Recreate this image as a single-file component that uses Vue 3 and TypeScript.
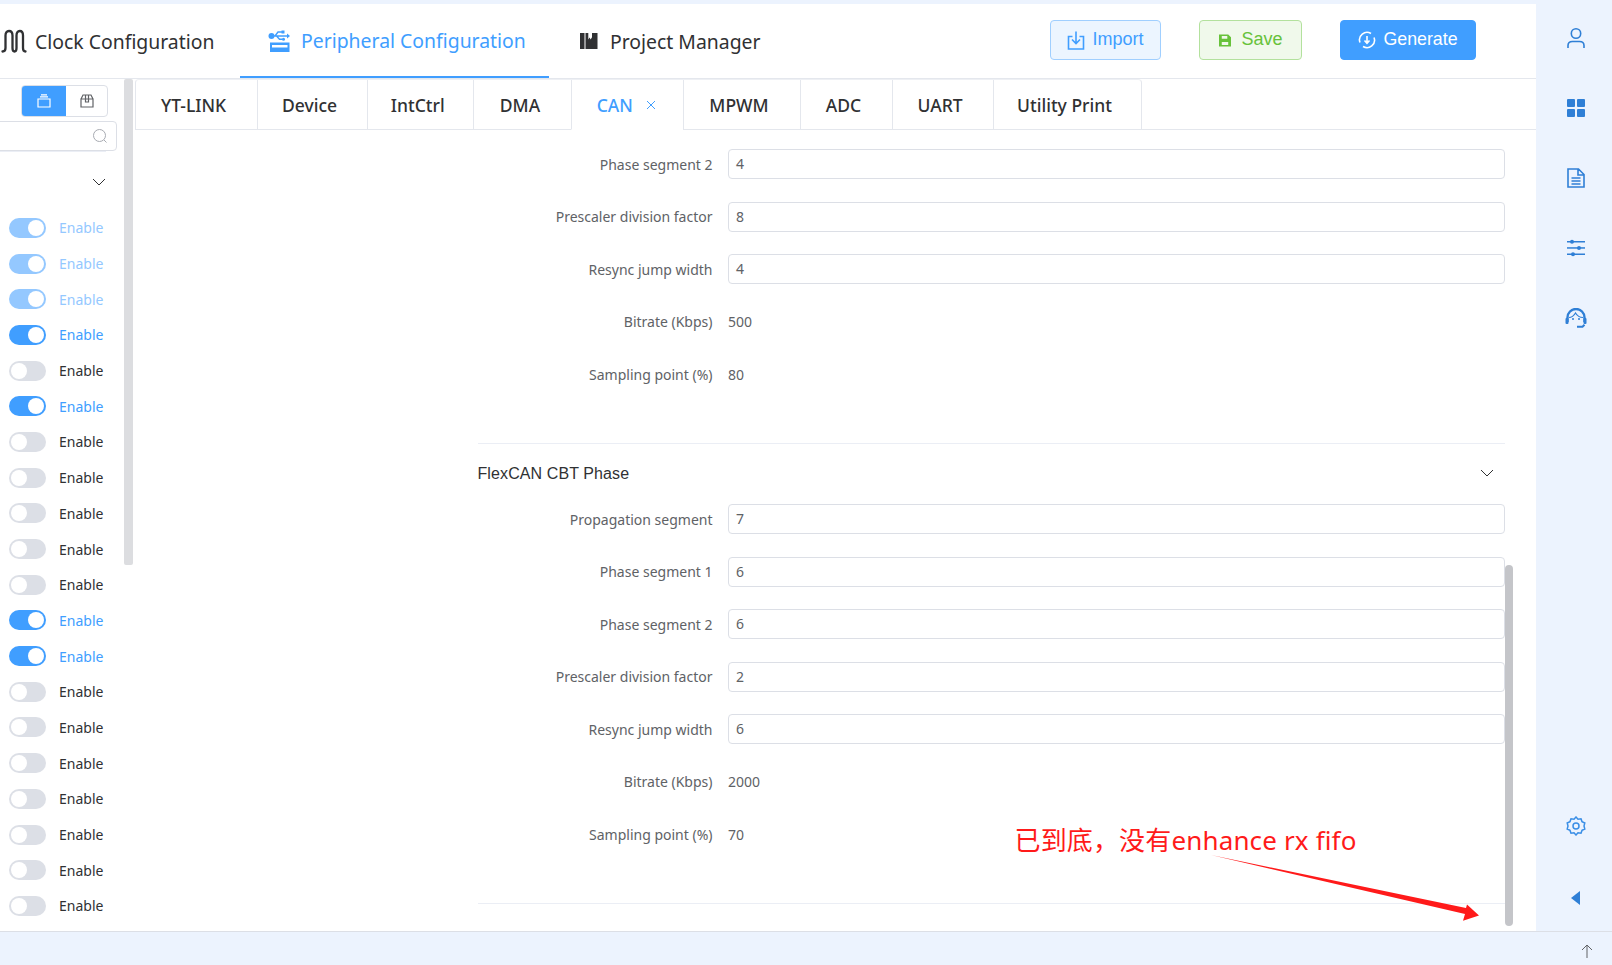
<script setup lang="ts">
interface Row { label: string; value: string; plain?: boolean }

const navTabs = ['YT-LINK', 'Device', 'IntCtrl', 'DMA', 'CAN', 'MPWM', 'ADC', 'UART', 'Utility Print']
const tabWidths = [121, 110, 106.5, 98, 111.5, 117, 92, 101, 148]

const toggles: Array<'dim' | 'on' | 'off'> = [
  'dim', 'dim', 'dim', 'on', 'off', 'on', 'off', 'off', 'off', 'off',
  'off', 'on', 'on', 'off', 'off', 'off', 'off', 'off', 'off', 'off',
]

const topRows: Row[] = [
  { label: 'Phase segment 2', value: '4' },
  { label: 'Prescaler division factor', value: '8' },
  { label: 'Resync jump width', value: '4' },
  { label: 'Bitrate (Kbps)', value: '500', plain: true },
  { label: 'Sampling point (%)', value: '80', plain: true },
]

const cbtRows: Row[] = [
  { label: 'Propagation segment', value: '7' },
  { label: 'Phase segment 1', value: '6' },
  { label: 'Phase segment 2', value: '6' },
  { label: 'Prescaler division factor', value: '2' },
  { label: 'Resync jump width', value: '6' },
  { label: 'Bitrate (Kbps)', value: '2000', plain: true },
  { label: 'Sampling point (%)', value: '70', plain: true },
]
</script>

<template>
  <div class="app">
    <div class="shell">
      <div class="work">
        <header class="header">
          <div class="nav nav-clock">
            <svg class="nav-icon" width="26" height="24" viewBox="0 0 26 24" fill="none" stroke="#303133" stroke-width="2.3" stroke-linecap="round">
              <path d="M1.5 22.5c2 0 3-1 3-3.500V6.500C4.500 3.500 5.700 2 8 2s3.500 1.500 3.500 4.500V19c0 2.500.6 3.500 2 3.500s2-1 2-3.500V6.500c0-3 1.200-4.500 3.300-4.500s3.200 1.500 3.200 4.500V19c0 2.500 1 3.500 2.500 3.500" />
            </svg>
            <span>Clock Configuration</span>
          </div>
          <div class="nav nav-periph">
            <svg class="nav-icon" width="22" height="22" viewBox="0 0 22 22" fill="none" stroke="#409eff" stroke-width="1.400">
              <circle cx="3.500" cy="6" r="3" fill="#409eff" stroke="none" />
              <path d="M3 6h16M7 6l3-4h4M8.500 6l3 3.200h3" />
              <path d="M19 3.500 22 6l-3 2.500z" fill="#409eff" stroke="none" />
              <rect x="13.500" y="0.500" width="3" height="3" fill="#409eff" stroke="none" />
              <circle cx="15.500" cy="9.200" r="1.500" fill="#409eff" stroke="none" />
              <path fill-rule="evenodd" d="M2 12.500h19.500V22H2zM4 15v2.500h15.500V15z" fill="#409eff" stroke="none" />
            </svg>
            <span>Peripheral Configuration</span>
          </div>
          <div class="nav nav-project">
            <svg class="nav-icon" width="18" height="18" viewBox="0 0 18 18" fill="#303133">
              <path d="M0 1h4.500v16H0z" />
              <path d="M5.500 1h2.800v6.500l1.200-2 1.200 2 1.300-2.200V1h5.500v16H5.500z" />
            </svg>
            <span>Project Manager</span>
          </div>
          <div class="actions">
            <button class="btn btn-import">
              <svg width="18" height="20" viewBox="0 0 18 20" fill="none" stroke="#409eff" stroke-width="1.600">
                <path d="M5.500 6.500H1.500V19h15V6.500h-4" />
                <path d="M9 1.500V13M5 9.500l4 4 4-4" />
              </svg>
              <span class="btn-text">Import</span>
            </button>
            <button class="btn btn-save">
              <svg width="12" height="13" viewBox="0 0 13 13" fill="#67c23a">
                <path fill-rule="evenodd" d="M0 0h10l3 3v10H0zM3 1.500v3h6v-3zM3 8v3.500h7V8z" />
              </svg>
              <span class="btn-text">Save</span>
            </button>
            <button class="btn btn-generate">
              <svg width="18" height="18" viewBox="0 0 18 18" fill="none" stroke="#fff" stroke-width="1.600">
                <path d="M2 11.500A7.500 7.500 0 0 1 13 2.500M16 6.500A7.500 7.500 0 0 1 5 15.500" />
                <path d="M9 5v7M6.500 9.500 9 12.200l2.500-2.700" />
              </svg>
              <span class="btn-text">Generate</span>
            </button>
          </div>
        </header>

        <div class="body">
          <aside class="left">
            <div class="switcher">
              <span class="sw sw-active">
                <svg width="14" height="14" viewBox="0 0 14 14" fill="none" stroke="#fff" stroke-width="1.200">
                  <path d="M1 5h12v8H1zM3 2.800h8M4 .8h6" />
                </svg>
              </span>
              <span class="sw">
                <svg width="14" height="14" viewBox="0 0 14 14" fill="none" stroke="#606266" stroke-width="1.200">
                  <path d="M1 5h12v8H1zM1 5l2-4h8l2 4M5.500 1v7h3V1" />
                </svg>
              </span>
            </div>
            <div class="search">
              <svg width="16" height="16" viewBox="0 0 16 16" fill="none" stroke="#a8abb2" stroke-width="1">
                <circle cx="7.500" cy="7.500" r="6" />
                <path d="m12 12 2.500 2.500" />
              </svg>
            </div>
            <div class="collapse-head">
              <svg width="14" height="14" viewBox="0 0 14 14" fill="none" stroke="#303133" stroke-width="1">
                <path d="m1 4 6 6 6-6" />
              </svg>
            </div>
            <div class="toggles">
              <div v-for="(state, i) in toggles" :key="i" class="toggle-row" :class="state">
                <span class="toggle"><span class="knob"></span></span>
                <span class="toggle-label">Enable</span>
              </div>
            </div>
            <div class="left-scroll"></div>
          </aside>

          <main class="main">
            <div class="tabs">
              <div class="tab-list">
                <div
                  v-for="(tab, i) in navTabs"
                  :key="tab"
                  class="tab"
                  :class="{ active: tab === 'CAN' }"
                  :style="{ width: tabWidths[i] + 'px' }"
                >
                  <span>{{ tab }}</span>
                  <svg v-if="tab === 'CAN'" class="tab-close" width="10" height="10" viewBox="0 0 10 10" stroke="#409eff" stroke-width="1">
                    <path d="m1 1 8 8M9 1 1 9" />
                  </svg>
                </div>
              </div>
            </div>
            <div class="content">
              <section class="group group-top">
                <div v-for="row in topRows" :key="row.label" class="row">
                  <label class="label">{{ row.label }}</label>
                  <div v-if="row.plain" class="plain">{{ row.value }}</div>
                  <div v-else class="input">{{ row.value }}</div>
                </div>
              </section>
              <section class="group group-cbt">
                <div class="group-head">
                  <span>FlexCAN CBT Phase</span>
                  <svg class="head-chevron" width="14" height="14" viewBox="0 0 14 14" fill="none" stroke="#303133" stroke-width="1">
                    <path d="m1 4 6 6 6-6" />
                  </svg>
                </div>
                <div v-for="row in cbtRows" :key="row.label + row.value" class="row">
                  <label class="label">{{ row.label }}</label>
                  <div v-if="row.plain" class="plain">{{ row.value }}</div>
                  <div v-else class="input">{{ row.value }}</div>
                </div>
              </section>
              <div class="main-scroll"></div>
            </div>
          </main>
        </div>
      </div>

      <nav class="rail">
        <div class="rail-cell">
          <svg width="18" height="20" viewBox="0 0 18 20" fill="none" stroke="#2f7fd6" stroke-width="1.600">
            <circle cx="9" cy="5.500" r="4.700" />
            <path d="M1 20v-2.500C1 14.500 3 13.500 5.500 13.500h7c2.500 0 4.500 1 4.500 4V20" />
          </svg>
        </div>
        <div class="rail-cell">
          <svg width="18" height="18" viewBox="0 0 18 18" fill="#2f7fd6">
            <rect x="0" y="0" width="8" height="8" rx="1" />
            <rect x="10" y="0" width="8" height="8" rx="1" />
            <rect x="0" y="10" width="8" height="8" rx="1" />
            <rect x="10" y="10" width="8" height="8" rx="1" />
          </svg>
        </div>
        <div class="rail-cell">
          <svg width="18" height="20" viewBox="0 0 18 20" fill="none" stroke="#2f7fd6" stroke-width="1.600">
            <path d="M1 1h10.500L17 6.500V19H1zM11 1v6h6M4.500 10h9M4.500 13h9M4.500 16h9" />
          </svg>
        </div>
        <div class="rail-cell">
          <svg width="18" height="18" viewBox="0 0 18 18" fill="#2f7fd6">
            <rect x="0" y="2" width="18" height="1.500" />
            <rect x="0" y="8.200" width="18" height="1.500" />
            <rect x="0" y="14.500" width="18" height="1.500" />
            <circle cx="5" cy="2.700" r="2" />
            <circle cx="12" cy="9" r="2" />
            <circle cx="6" cy="15.200" r="2" />
          </svg>
        </div>
        <div class="rail-cell">
          <svg width="22" height="20" viewBox="0 0 22 20" fill="none" stroke="#2f7fd6" stroke-width="2.400">
            <path d="M2.500 14V9.500a8.500 8.500 0 0 1 17 0V14" />
            <path d="M4 9.500c3 0 5-2 6.500-4.500 1.500 2.500 4 4.500 7.500 4.500" stroke-width="1.200" />
            <path d="M12 18.700h5.500l2-2" stroke-width="2" />
            <rect x="0.500" y="10" width="3" height="6" rx="1" fill="#2f7fd6" stroke="none" />
            <rect x="18.500" y="10" width="3" height="6" rx="1" fill="#2f7fd6" stroke="none" />
            <circle cx="8" cy="11" r="1" fill="#2f7fd6" stroke="none" />
            <circle cx="14" cy="11" r="1" fill="#2f7fd6" stroke="none" />
          </svg>
        </div>
        <div class="rail-spacer"></div>
        <div class="rail-cell rail-gear">
          <svg width="20" height="20" viewBox="0 0 20 20" fill="none" stroke="#3a8ee6" stroke-width="1.500">
            <path d="M10 1l2 2.200 3-.4 1 2.800 2.800 1.400-.8 3 .8 3-2.800 1.400-1 2.800-3-.4-2 2.200-2-2.200-3 .4-1-2.800L1.200 13l.8-3-.8-3L4 5.600l1-2.800 3 .4z" />
            <circle cx="10" cy="10" r="3" />
          </svg>
        </div>
        <div class="rail-cell rail-last">
          <svg width="10" height="14" viewBox="0 0 10 14" fill="#2f7fd6">
            <path d="M9 0v14L0 7z" />
          </svg>
        </div>
      </nav>
    </div>

    <footer class="footer">
      <svg width="12" height="14" viewBox="0 0 12 14" fill="none" stroke="#606266" stroke-width="1">
        <path d="M6 14V1M1 6l5-5 5 5" />
      </svg>
    </footer>

    <div class="note">已到底，没有enhance rx fifo</div>
    <svg class="note-arrow" width="1612" height="965" viewBox="0 0 1612 965">
      <path d="M1211 855 1466 908 1467 904.500 1479 915.500 1463 920.700 1465 914z" fill="#ff1a1a" />
    </svg>
  </div>
</template>

<style>
html, body { margin: 0; padding: 0; background: #ecf3fe; }
</style>

<style scoped>
.app {
  position: relative;
  width: 1612px;
  height: 965px;
  overflow: hidden;
  background: #ecf3fe;
  font-family: "Noto Sans", "Open Sans", sans-serif;
  color: #303133;
  display: flex;
  flex-direction: column;
}
.shell { display: flex; height: 927px; margin-top: 4px; }
.work { width: 1536px; display: flex; flex-direction: column; background: #fff; }

.header {
  height: 75px;
  box-sizing: border-box;
  flex: none;
  display: flex;
  align-items: stretch;
  border-bottom: 1px solid #e4e7ed;
  font-size: 19.4px;
}
.nav { display: flex; align-items: center; box-sizing: border-box; height: 74px; }
.nav-clock { width: 240px; padding-left: 1px; gap: 8px; }
.nav-periph {
  width: 309px;
  padding: 1px 0 0 28px;
  gap: 11px;
  color: #409eff;
  border-bottom: 2px solid #409eff;
}
.nav-project { padding-left: 31px; gap: 12px; }
.actions { margin-left: auto; display: flex; align-items: center; padding: 0 60px 2px 0; gap: 38px; }
.btn {
  height: 40px;
  box-sizing: border-box;
  border-radius: 4px;
  border: 1px solid;
  font-family: "Liberation Sans", sans-serif;
  font-size: 18px;
  display: flex;
  align-items: center;
  justify-content: center;
  padding: 0;
  gap: 7px;
}
.btn-text { margin-top: -1px; }
.btn-import { width: 111px; background: #ecf5ff; border-color: #a0cfff; color: #409eff; }
.btn-save { width: 103px; background: #f0f9eb; border-color: #b3e19d; color: #67c23a; gap: 10px; padding-left: 1px; }
.btn-generate { width: 136px; background: #409eff; border-color: #409eff; color: #fff; font-size: 17.8px; }

.body { flex: 1; display: flex; min-height: 0; }

.left { position: relative; width: 134.5px; flex: none; overflow: hidden; }
.switcher {
  display: flex;
  width: 87px;
  height: 32px;
  margin: 6px 0 0 21px;
  box-sizing: border-box;
  border: 1px solid #dcdfe6;
  border-radius: 4px;
  overflow: hidden;
}
.sw { display: flex; align-items: center; justify-content: center; flex: 1; }
.sw-active { flex: none; width: 45px; margin: -1px 0 -1px -1px; background: #409eff; }
.search {
  box-sizing: border-box;
  width: 127px;
  height: 30px;
  margin: 4px 0 0 -10px;
  border: 1px solid #dcdfe6;
  border-radius: 4px;
  display: flex;
  align-items: center;
  justify-content: flex-end;
  padding-right: 8px;
}
.collapse-head {
  display: flex;
  justify-content: flex-end;
  align-items: center;
  height: 60px;
  width: 106px;
  border-top: 1px solid #ebeef5;
  box-sizing: border-box;
}
.toggles { display: flex; flex-direction: column; margin-top: -1px; }
.toggle-row {
  display: flex;
  align-items: center;
  height: 35.7px;
  flex: none;
  padding-left: 9px;
  gap: 13px;
  font-size: 14px;
}
.toggle {
  width: 37px;
  height: 20px;
  border-radius: 10px;
  background: #dcdfe6;
  position: relative;
  flex: none;
}
.knob {
  position: absolute;
  top: 2px;
  left: 2px;
  width: 16px;
  height: 16px;
  border-radius: 50%;
  background: #fff;
}
.on .toggle { background: #409eff; }
.on .knob, .dim .knob { left: 19px; }
.dim .toggle { background: #94c8ff; }
.on .toggle-label { color: #409eff; }
.dim .toggle-label { color: #94c8ff; }
.left-scroll {
  position: absolute;
  top: 0;
  left: 124px;
  width: 9px;
  height: 486px;
  background: #dcdde0;
  border-radius: 2px;
}

.main { flex: 1; min-width: 0; display: flex; flex-direction: column; }
.tabs {
  height: 51px;
  flex: none;
  box-sizing: border-box;
  border-bottom: 1px solid #e4e7ed;
}
.tab-list {
  display: flex;
  height: 50px;
  width: fit-content;
  box-sizing: border-box;
  border: 1px solid #e4e7ed;
  border-radius: 4px 4px 0 0;
  border-top-color: #eef0f4;
  border-bottom: none;
}
.tab {
  box-sizing: border-box;
  flex: none;
  display: flex;
  align-items: center;
  justify-content: center;
  gap: 13px;
  padding-right: 5px;
  font-size: 17.5px;
  font-weight: 500;
  border-left: 1px solid #e4e7ed;
  border-bottom: 1px solid #e4e7ed;
  height: 50px;
}
.tab:first-child { border-left: none; }
.tab.active { color: #409eff; border-bottom-color: #fff; padding-right: 2px; }

.content { position: relative; flex: 1; min-height: 0; overflow: hidden; }
.group { margin-left: 343px; width: 1027.5px; }
.group-top { padding-top: 19px; height: 314px; box-sizing: border-box; border-bottom: 1px solid #ebeef5; }
.group-cbt { height: 460px; box-sizing: border-box; border-bottom: 1px solid #ebeef5; }
.group-head {
  height: 60px;
  display: flex;
  align-items: center;
  justify-content: space-between;
  padding-right: 11px;
  box-sizing: border-box;
  font-family: "Liberation Sans", sans-serif;
  font-size: 16px;
  letter-spacing: .1px;
}
.head-chevron { margin-bottom: 2px; }
.row { display: flex; align-items: center; height: 30px; margin-bottom: 22.5px; }
.label {
  width: 235px;
  flex: none;
  text-align: right;
  font-size: 14px;
  color: #606266;
}
.input {
  box-sizing: border-box;
  margin-left: 15.5px;
  flex: 1;
  height: 30px;
  line-height: 28px;
  padding: 0 7px;
  border: 1px solid #dcdfe6;
  border-radius: 4px;
  font-size: 14px;
  color: #606266;
}
.plain { margin-left: 15.5px; font-size: 14px; color: #606266; }
.main-scroll {
  position: absolute;
  left: 1370.5px;
  top: 435px;
  width: 8px;
  height: 361px;
  border-radius: 4px;
  background: #c4c5c9;
}

.rail {
  width: 76px;
  flex: none;
  display: flex;
  flex-direction: column;
  align-items: center;
  box-sizing: border-box;
  padding-left: 4px;
}
.rail-cell {
  height: 70px;
  width: 100%;
  flex: none;
  box-sizing: border-box;
  padding-bottom: 2px;
  display: flex;
  align-items: center;
  justify-content: center;
}
.rail-spacer { flex: 1; }
.rail-gear { padding-bottom: 0; margin-bottom: 4px; }
.rail-last { height: 66px; padding-bottom: 0; }

.footer {
  flex: 1;
  box-sizing: border-box;
  border-top: 1px solid #dcdfe6;
  display: flex;
  align-items: center;
  justify-content: flex-end;
  padding-right: 19px;
  padding-top: 4px;
}

.note {
  position: absolute;
  left: 1014.5px;
  top: 820px;
  font-size: 26px;
  line-height: 40px;
  letter-spacing: .15px;
  color: #ff1a1a;
  font-family: "Noto Sans", "Noto Sans CJK SC", sans-serif;
  white-space: nowrap;
}
.note-arrow { position: absolute; left: 0; top: 0; pointer-events: none; }
</style>
